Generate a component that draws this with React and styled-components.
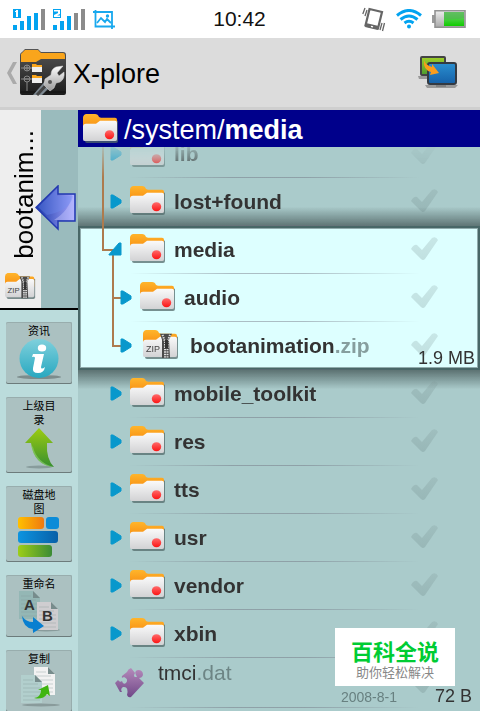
import React from "react";
import styled, { createGlobalStyle } from "styled-components";

const GlobalStyle = createGlobalStyle`
  * { box-sizing: border-box; }
  body { margin: 0; font-family: "Liberation Sans", "Noto Sans CJK SC", sans-serif; color: #333; }
  button { font: inherit; color: inherit; border: 0; padding: 0; background: none; cursor: pointer; }
  svg { display: block; flex: none; }
`;

const Screen = styled.div`
  display: flex;
  flex-direction: column;
  height: 100vh;
  overflow: hidden;
  background: #aacbcb;
`;

const StatusBar = styled.header`
  display: grid;
  grid-template-columns: 1fr auto 1fr;
  align-items: center;
  flex: none;
  height: 38px;
  padding: 0 14px 0 13px;
  background: #fff;
  color: #111;
  font-size: 21px;
`;

const StatusGroup = styled.div`
  display: flex;
  align-items: center;
  gap: ${(p) => p.$gap}px;
  justify-content: ${(p) => (p.$end ? "flex-end" : "flex-start")};
`;

const TitleBar = styled.header`
  display: flex;
  align-items: center;
  flex: none;
  height: 72px;
  padding: 0 21px 0 6px;
  background: #dcdcdc;
  border-bottom: 3px solid #cfcfcf;
`;

const HomeButton = styled.button`
  display: flex;
  align-items: center;
  gap: 3px;
`;

const Title = styled.h1`
  flex: 1;
  margin: 0 0 0 7px;
  padding-top: 4px;
  font-size: 27px;
  font-weight: 400;
  color: #000;
`;

const Body = styled.div`
  display: grid;
  grid-template-columns: 78px minmax(0, 1fr);
  flex: 1;
  min-height: 0;
`;

const Sidebar = styled.aside`
  display: flex;
  flex-direction: column;
  overflow: hidden;
  background: #bbdcdc;
`;

const OtherPane = styled.button`
  position: relative;
  display: flex;
  flex: none;
  height: 200px;
  background: #9abbbd;
  border-bottom: 2px solid #000;
`;

const PaneTab = styled.span`
  display: flex;
  flex-direction: column;
  justify-content: flex-end;
  align-items: center;
  gap: 14px;
  width: 41px;
  height: 100%;
  padding-bottom: 9px;
  background: #eee;
`;

const PaneName = styled.span`
  writing-mode: vertical-rl;
  transform: rotate(180deg);
  font-size: 26px;
  line-height: 30px;
  margin-left: 6px;
  color: #000;
`;

const PaneArrow = styled.span`
  position: absolute;
  top: 75px;
  right: 2px;
`;

const Tools = styled.nav`
  display: flex;
  flex-direction: column;
  align-items: center;
  gap: 13px;
  padding-top: 12px;
`;

const ToolButton = styled.button`
  display: flex;
  flex-direction: column;
  align-items: center;
  flex: none;
  gap: 1px;
  width: 66px;
  padding: 1px 0 4px;
  border-radius: 2px;
  background: #abc1c1;
  box-shadow: inset 0 -1px #6c7b7b, inset 0 1px #98adad, inset -1px 0 #98adad;
`;

const ToolLabel = styled.span`
  max-width: 34px;
  font-family: "Noto Sans CJK SC", sans-serif;
  font-size: 11px;
  line-height: 14px;
  color: #000;
`;

const Pane = styled.main`
  display: flex;
  flex-direction: column;
  min-height: 0;
`;

const PathBar = styled.h2`
  display: flex;
  align-items: center;
  flex: none;
  gap: 5px;
  height: 37px;
  margin: 0;
  padding: 0 5px;
  background: #00008b;
  color: #fff;
  font-size: 27px;
  font-weight: 400;
`;

const PathText = styled.span`
  padding-top: 3px;
`;

const Tree = styled.div`
  flex: 1;
  min-height: 0;
  overflow: hidden;
  mask-image: linear-gradient(rgba(0, 0, 0, 0.15), #000 30px);
`;

const TreeRows = styled.div`
  margin-top: -17px;
`;

const shades = {
  above: "linear-gradient(transparent 60%, #5f7575)",
  below: "linear-gradient(#5c7272, transparent 40%)",
};

const Row = styled.div`
  position: relative;
  display: flex;
  align-items: center;
  height: 48px;
  padding-right: 41px;
  background:
    linear-gradient(90deg, transparent, rgba(110, 110, 125, 0.45) 35%, rgba(110, 110, 125, 0.45) 60%, transparent) 52px 100% / 290px 1px no-repeat,
    ${(p) => shades[p.$shade] || "none"};
`;

const OpenBranch = styled.section`
  background: #dff;
  box-shadow: inset 0 0 0 2px #486767, inset 0 0 0 3px #90abac;
`;

const RowIcon = styled.span`
  padding-bottom: 3px;
`;

const Name = styled.span`
  flex: 1;
  margin-left: ${(p) => p.$gap}px;
  font-size: 21px;
  font-weight: ${(p) => (p.$plain ? 400 : 700)};
  white-space: nowrap;
`;

const Extension = styled.span`
  color: ${(p) => (p.$plain ? "#6d8585" : "#869e9e")};
`;

const FileRow = styled(Row)`
  height: 50px;
  ${Name} { align-self: flex-start; margin-top: 3px; }
`;

const Facts = styled.span`
  position: absolute;
  right: ${(p) => p.$right}px;
  bottom: ${(p) => p.$bottom}px;
  display: flex;
  align-items: baseline;
  font-size: 18px;
  line-height: 22px;
`;

const DateText = styled.time`
  margin-right: 38px;
  font-size: 14px;
  color: #688080;
`;

const Tick = styled.label`
  position: relative;
  padding-bottom: 3px;
  cursor: pointer;
  input { position: absolute; inset: 0; margin: 0; opacity: 0; }
`;

const Watermark = styled.aside`
  position: fixed;
  right: 25px;
  bottom: 25px;
  width: 120px;
  height: 58px;
  padding-top: 8px;
  background: #fff;
  text-align: center;
  font-family: "Noto Sans CJK SC", sans-serif;
`;

const WatermarkTitle = styled.div`
  font-size: 22px;
  line-height: 28px;
  font-weight: 700;
  color: #0c3;
`;

const WatermarkText = styled.div`
  font-size: 13px;
  line-height: 16px;
  color: #888;
`;

const gradients = {
  orange: ["#ffb52b", "#f78a10"],
  paper: ["#fafafa", "#d2d2d4"],
  red: ["#ff6a6a", "#fb1414"],
  dark: ["#555", "#1b1b1b"],
  battery: ["#7fd47f", "#10cc00"],
  shell: ["#eee", "#aaa"],
  blue: ["#2a8fd0", "#1560a8"],
  lime: ["#a0d028", "#4a9a30"],
  info: ["#7fd0dc", "#28a8c0"],
  grow: ["#9ccc10", "#389030"],
  violet: ["#b58abb", "#704888"],
  steel: ["#fff", "#999"],
  tick: ["#7c9494", "#5c7474"],
};

function Gradients() {
  return (
    <defs>
      {Object.entries(gradients).map(([id, [from, to]]) => (
        <linearGradient key={id} id={id} x1="0" y1="0" x2="0" y2="1">
          <stop stopColor={from} />
          <stop offset="1" stopColor={to} />
        </linearGradient>
      ))}
      <linearGradient id="amber"><stop stopColor="#ffc000" /><stop offset="1" stopColor="#ef7910" /></linearGradient>
      <linearGradient id="azure"><stop stopColor="#0c94e0" /><stop offset="1" stopColor="#0860a8" /></linearGradient>
      <linearGradient id="leaf"><stop stopColor="#9dce18" /><stop offset="1" stopColor="#3b8b35" /></linearGradient>
      <linearGradient id="indigo"><stop stopColor="#1838a8" /><stop offset="1" stopColor="#a8a8ff" /></linearGradient>
    </defs>
  );
}

function Signal({ sim, bars }) {
  return (
    <svg width="33" height="22" viewBox="0 0 33 22">
      {[5, 9, 14, 17, 21].map((h, i) => (
        <path key={h} d={`M${i * 7} 22h4v-${h}h-4z`} fill={i < bars ? "#02a3f0" : "#8b8b8b"} />
      ))}
      <path d="M0 1h8v9H0z" fill="#02a3f0" />
      <path d={sim === 1 ? "M3 2h2v7H3V4H2V3h1z" : "M1 2h6v4L4 7.500h3V9H1V7l4-2V3.500H1z"} fill="#fff" />
    </svg>
  );
}

function Picture() {
  return (
    <svg width="22" height="19" viewBox="0 0 22 19" fill="none" stroke="#18a8ee" strokeWidth="1.800">
      <path d="M0 2h19v17M2.500 0v16.500H22" />
      <path d="m4 13 4-5 4 4 2-3 4 4" />
      <circle cx="14.500" cy="6" r=".8" />
    </svg>
  );
}

function Vibrate() {
  return (
    <svg width="24" height="25" viewBox="0 0 24 25" fill="none" stroke="#666">
      <path d="M7.500 2 20 5l-4 16.500L3.500 18.500z" strokeWidth="2.200" />
      <path d="m3.500 18 12.800 3" strokeWidth="4" />
      <path d="m9 19.300 2 .5" stroke="#fff" strokeWidth="1.300" />
      <path d="M3 1 .8 7M5 3 3 9M20 16l-2 7M22.500 16l-2 8" strokeWidth="1.300" />
    </svg>
  );
}

function Wifi() {
  return (
    <svg width="26" height="20" viewBox="0 0 26 20" fill="none" stroke="#02a3f0" strokeWidth="3">
      <path d="M1 6.500Q13-3.500 25 6.500M4.500 10.500q8.500-7 17 0M8.500 14q4.500-3.500 9 0" />
      <circle cx="13" cy="17.500" r="2" fill="#02a3f0" stroke="none" />
    </svg>
  );
}

function Battery() {
  return (
    <svg width="34" height="18" viewBox="0 0 34 18">
      <path d="M0 5h4v8H0z" fill="#999" />
      <path d="M3 .8h30v16.400H3z" fill="url(#shell)" stroke="#939393" strokeWidth="1.600" />
      <path d="M12 2h20v14H12z" fill="url(#battery)" />
      <path d="M12 2h20v6q-8 2-20 1z" fill="#52b452" opacity=".65" />
    </svg>
  );
}

function Chevron() {
  return (
    <svg width="11" height="22" viewBox="0 0 11 22">
      <path d="M7 0h4L5 11l6 11H7L1 11z" fill="#aaa" />
    </svg>
  );
}

function AppIcon() {
  return (
    <svg width="46" height="47" viewBox="0 0 46 47">
      <path d="M0 6q0-2 2-3l3-3h13l3 3h22q3 0 3 3v38q0 2-2 2H2q-2 0-2-2z" fill="url(#dark)" />
      <path d="M1 13V5l4-4h13l3 3h22q2 0 2 3v3H21l-5 3z" fill="#f9a51c" />
      <path d="M1 43h44" stroke="#111" />
      <g fill="none" stroke="#888">
        <path d="M1 19h12M1 30h12M7 33v9M7 16v6M4 19h6M4 30h6" />
        <circle cx="7" cy="19" r="3" /><circle cx="7" cy="30" r="3" />
      </g>
      <path d="M12 16h4l1 1h5v6H12zM12 27h4l1 1h5v6H12z" fill="#eee" />
      <path d="M12 15h4l1 1h5v2H12zM12 26h4l1 1h5v2H12z" fill="#f9a51c" />
      <path d="m13 46 13-15 6 5-10 10z" fill="#7c8790" />
      <path d="m17 46 12-13" stroke="#444" strokeWidth="3" />
      <path d="M25 30l6-4q0-6 5-8l7-1-6 7 2 3 5-4q1 7-4 10l-4 1-2 5-4 3-6-6z" fill="url(#steel)" stroke="#ddd" strokeWidth=".5" />
      <circle cx="30" cy="33" r="2" fill="#555" />
    </svg>
  );
}

function Screens() {
  return (
    <svg width="41" height="33" viewBox="0 0 41 33">
      <path d="M0 20h10v3H1zM7 29h33l-3 3H9z" fill="#999" />
      <rect x="3" y="1" width="24" height="18" rx="1" fill="url(#lime)" stroke="#444" strokeWidth="2" />
      <rect x="10" y="7" width="28" height="21" rx="2" fill="url(#blue)" stroke="#343a42" strokeWidth="2" />
      <path d="M18 30h10" stroke="#666" />
      <path d="M6 4q1 5 8 7V8l7 9-9 2 1-3Q5 14 6 4z" fill="#f99d1c" />
    </svg>
  );
}

function Folder({ width = 36, height = 29, zip }) {
  return (
    <svg width={width} height={height} viewBox="0 0 36 30" preserveAspectRatio="none">
      <path d="M2 3v25q0 2 2 2h29q2 0 2-2V7z" fill="#536b6b" opacity=".75" />
      <path d="M0 4q0-3 3-4h9q3 0 4 3l2 1h14q2 0 2 2v10H0z" fill="url(#orange)" />
      <path d="M0 13q0-3 3-3h10l4-3h15q2 0 2 2v17q0 2-2 2H2q-2 0-2-2z" fill="url(#paper)" />
      {zip ? (
        <g>
          <path d="M17 4h12l-3 6 1 19h-8V10z" fill="#4a4a4a" />
          <path d="M19.500 5l2.500 7v17M27 5l-2.500 7v17" fill="none" stroke="#ddd" strokeWidth="2" strokeDasharray="1.500 1" />
          <path d="M22 10h3v9h-3z" fill="#333" />
          <text x="3" y="23" fontFamily="Liberation Sans" fontSize="9" fill="#444">ZIP</text>
        </g>
      ) : (
        <circle cx="26.500" cy="21.500" r="4.700" fill="url(#red)" />
      )}
    </svg>
  );
}

function BlueArrow() {
  return (
    <svg width="41" height="46" viewBox="0 0 41 46">
      <path d="M1 22.500 23 1v8h17v27H23v8z" fill="url(#indigo)" stroke="#2238b0" strokeWidth="1.500" />
      <path d="M39 10v25H19Q35 25 37 10z" fill="#ccccff" opacity=".4" />
      <path d="M3 22 22 4v7h16Q35 26 12 30z" fill="#6c8cf0" opacity=".35" />
    </svg>
  );
}

function Puzzle() {
  return (
    <svg width="30" height="30" viewBox="0 0 30 30">
      <path d="M7 8 12 4Q13 1 16 0L20 5Q18 8 20 9L22 9Q18 3 23 2Q28 2 28 7Q27 10 24 10L29 15L16 29Q13 30 12 27Q14 18 8 19Q5 21 7 24L5 24L0 15L3 12Q5 15 7 13Q8 17 11 15Q14 11 9 9Q6 11 7 8z" fill="url(#violet)" />
    </svg>
  );
}

function InfoIcon() {
  return (
    <svg width="46" height="42" viewBox="0 0 46 42">
      <ellipse cx="23" cy="39" rx="22" ry="2" fill="#7c8c8c" />
      <circle cx="23" cy="20.500" r="19.500" fill="url(#info)" />
      <ellipse cx="26" cy="10" rx="4.200" ry="3.500" fill="#fff" />
      <path d="M17 16h11l-3 13q0 3 4 0-1 6-7 6-6 0-5-5l2-10q0-2-3-1z" fill="#fff" />
    </svg>
  );
}

function UpIcon() {
  return (
    <svg width="46" height="42" viewBox="0 0 46 42">
      <ellipse cx="23" cy="40" rx="13" ry="1.500" fill="#889c9c" />
      <path d="m23 1 14 15h-6q-1 16 7 24-20-2-23-24H9z" fill="url(#grow)" />
      <path d="M17 20q4 15 20 20-18-2-22-22z" fill="#8ed070" opacity=".6" />
    </svg>
  );
}

function BlocksIcon() {
  return (
    <svg width="42" height="42" viewBox="0 0 42 42">
      <rect x="0" y="1" width="26" height="12" rx="3" fill="url(#amber)" />
      <rect x="28" y="1" width="13" height="12" rx="3" fill="#0c8cd8" />
      <rect x="0" y="15" width="40" height="12" rx="3" fill="url(#azure)" />
      <rect x="0" y="29" width="34" height="12" rx="3" fill="url(#leaf)" />
    </svg>
  );
}

function Sheet({ x, y, tint, letter }) {
  return (
    <g transform={`translate(${x} ${y})`}>
      <path d="M0 0h14l7 7v21H0z" fill={tint} />
      <path d="m14 0 7 7h-7z" fill="#778c8c" />
      <path d="M2 5h10M2 9h15M2 13h17M2 17h17M2 21h17M2 25h17" stroke="#889c9c" opacity=".4" />
      {letter && <text x="5" y="19" fontFamily="Liberation Sans" fontWeight="700" fontSize="15" fill="#333">{letter}</text>}
    </g>
  );
}

function RenameIcon() {
  return (
    <svg width="42" height="42" viewBox="0 0 42 42">
      <ellipse cx="28" cy="39" rx="14" ry="1.500" fill="#899b9b" />
      <Sheet x={1} y={0} tint="#94b7b5" letter="A" />
      <Sheet x={19} y={11} tint="#cfcdd0" letter="B" />
      <path d="M4 25q4 6 11 6v-5l11 9-11 7v-4Q5 37 4 25z" fill="#087fd0" />
    </svg>
  );
}

function CopyIcon() {
  return (
    <svg width="42" height="42" viewBox="0 0 42 42">
      <ellipse cx="23" cy="39" rx="19" ry="1.500" fill="#899b9b" />
      <Sheet x={16} y={1} tint="#f2f2f2" />
      <Sheet x={3} y={9} tint="#b2cfcd" />
      <path d="M16 32q7-1 7-8h-3l10-5 2 11-3-2q-4 6-13 4z" fill="#40b510" />
    </svg>
  );
}

const tools = [
  ["资讯", InfoIcon],
  ["上级目录", UpIcon],
  ["磁盘地图", BlocksIcon],
  ["重命名", RenameIcon],
  ["复制", CopyIcon],
];

/* Branch lines and the expander that lead up to a row's icon. */
function Guide({ width = 52, line, child, open }) {
  return (
    <svg width={width} height="48" viewBox={`0 0 ${width} 48`}>
      {line && <path d={line} fill="none" stroke="#ad7b4e" strokeWidth="2" />}
      {open ? (
        <path d="M31 28.500 41 17h2v12H31z" fill="#0898cc" stroke="#0898cc" strokeLinejoin="round" />
      ) : (
        <path d={child ? "M43 17h2l8 5v3l-8 5h-2z" : "M33 17h2l8 5v3l-8 5h-2z"} fill="#0898cc" stroke="#0898cc" strokeLinejoin="round" />
      )}
    </svg>
  );
}

function TickBox({ name }) {
  return (
    <Tick>
      <input type="checkbox" aria-label={name} />
      <svg width="29" height="25" viewBox="0 0 29 25">
        <path d="M1 13Q4 8 7 9L12 14L22 2Q26 0 28 4L15 23Q13 25 11 23z" fill="url(#tick)" opacity=".22" />
      </svg>
    </Tick>
  );
}

function TreeRow({ name, ext, zip, shade, line, child, open, size }) {
  return (
    <Row $shade={shade}>
      <button aria-label={`${name} 展开`} aria-expanded={!!open}>
        <Guide width={zip ? 65 : child ? 62 : 52} line={line} child={child} open={open} />
      </button>
      <RowIcon><Folder zip={zip} /></RowIcon>
      <Name $gap={zip ? 11 : 8}>{name}{ext && <Extension>{ext}</Extension>}</Name>
      <TickBox name={name} />
      {size && <Facts $right={5} $bottom={1}>{size}</Facts>}
    </Row>
  );
}

export default function App() {
  return (
    <Screen>
      <GlobalStyle />
      <StatusBar>
        <StatusGroup $gap={7}>
          <Signal sim={1} bars={4} />
          <Signal sim={2} bars={3} />
          <Picture />
        </StatusGroup>
        <time>10:42</time>
        <StatusGroup $gap={10} $end>
          <Vibrate />
          <Wifi />
          <Battery />
        </StatusGroup>
        <svg width="0" height="0" style={{ position: "absolute" }}><Gradients /></svg>
      </StatusBar>
      <TitleBar>
        <HomeButton aria-label="返回"><Chevron /><AppIcon /></HomeButton>
        <Title>X-plore</Title>
        <button aria-label="切换窗格"><Screens /></button>
      </TitleBar>
      <Body>
        <Sidebar>
          <OtherPane>
            <PaneTab>
              <PaneName>bootanim...</PaneName>
              <Folder width={31} height={26} zip />
            </PaneTab>
            <PaneArrow><BlueArrow /></PaneArrow>
          </OtherPane>
          <Tools>
            {tools.map(([label, Icon]) => (
              <ToolButton key={label}>
                <ToolLabel>{label}</ToolLabel>
                <Icon />
              </ToolButton>
            ))}
          </Tools>
        </Sidebar>
        <Pane>
          <PathBar>
            <Folder />
            <PathText>/system/<b>media</b></PathText>
          </PathBar>
          <Tree>
            <TreeRows>
              <TreeRow name="lib" line="M25 0v48" />
              <TreeRow name="lost+found" line="M25 0v48" shade="above" />
              <OpenBranch>
                <TreeRow name="media" line="M25 0v24h12M35 29v19" open />
                <TreeRow name="audio" line="M35 0v48M35 24h8" child />
                <TreeRow name="bootanimation" ext=".zip" line="M35 0v24h8" child zip size="1.9 MB" />
              </OpenBranch>
              <TreeRow name="mobile_toolkit" shade="below" />
              {["res", "tts", "usr", "vendor", "xbin"].map((name) => (
                <TreeRow key={name} name={name} />
              ))}
              <FileRow>
                <svg width="37" height="30" aria-hidden="true" />
                <Puzzle />
                <Name $gap={13} $plain>tmci<Extension $plain>.dat</Extension></Name>
                <TickBox name="tmci.dat" />
                <Facts $right={8} $bottom={0}><DateText>2008-8-1</DateText>72 B</Facts>
              </FileRow>
            </TreeRows>
          </Tree>
        </Pane>
      </Body>
      <Watermark>
        <WatermarkTitle>百科全说</WatermarkTitle>
        <WatermarkText>助你轻松解决</WatermarkText>
      </Watermark>
    </Screen>
  );
}
